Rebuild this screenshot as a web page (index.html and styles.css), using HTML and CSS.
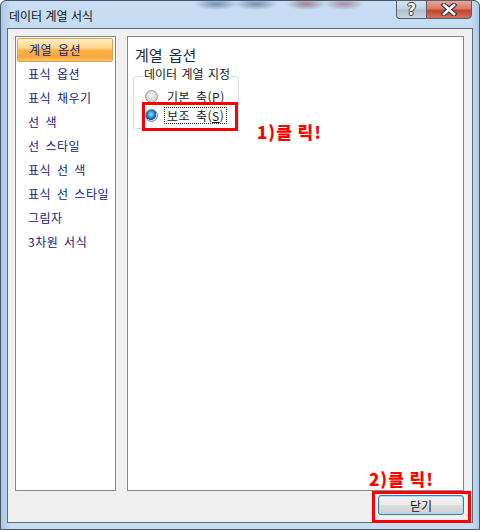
FILE: index.html
```html
<!DOCTYPE html>
<html lang="ko">
<head>
    <meta charset="UTF-8">
    <title>데이터 계열 서식</title>
    <link rel="stylesheet" href="styles.css">
</head>
<body>
    <div class="window">
        <div class="titlebar">
            <span class="title">데이터 계열 서식</span>
            <div class="caption">
                <span class="cap help">?</span>
                <span class="cap close">
                    <svg width="18" height="13" viewBox="0 0 18 13">
                        <path d="M4 2 L14 11 M14 2 L4 11" stroke="#3a3a3a" stroke-width="5" stroke-linecap="square"/>
                        <path d="M4 2 L14 11 M14 2 L4 11" stroke="#fff" stroke-width="2.6" stroke-linecap="square"/>
                    </svg>
                </span>
            </div>
        </div>

        <div class="client">
            <div class="panes">
                <ul class="nav">
                    <li class="active">계열 옵션</li>
                    <li>표식 옵션</li>
                    <li>표식 채우기</li>
                    <li>선 색</li>
                    <li>선 스타일</li>
                    <li>표식 선 색</li>
                    <li>표식 선 스타일</li>
                    <li>그림자</li>
                    <li>3차원 서식</li>
                </ul>
                <div class="content">
                    <h1>계열 옵션</h1>
                    <div class="group">
                        <div class="group-label">데이터 계열 지정</div>
                        <label class="radio">
                            <span class="dot"></span>
                            <span class="text">기본 축(<u>P</u>)</span>
                        </label>
                        <label class="radio checked">
                            <span class="dot"></span>
                            <span class="text focus">보조 축(<u>S</u>)</span>
                        </label>
                    </div>
                </div>
            </div>
            <div class="footer">
                <button class="btn">닫기</button>
            </div>
        </div>

        <!-- annotations -->
        <div class="mark mark-axis"></div>
        <div class="note note-axis">1)클 릭!</div>
        <div class="mark mark-close"></div>
        <div class="note note-close">2)클 릭!</div>
    </div>
</body>
</html>
```

FILE: styles.css
```css
* {
    margin: 0;
    padding: 0;
    box-sizing: border-box;
}

body {
    font-family: "Noto Sans CJK KR", "Noto Sans", sans-serif;
    font-size: 12px;
    background: #fff;
}

.window {
    position: relative;
    width: 480px;
    height: 530px;
    border: 1px solid #4a5566;
    border-radius: 6px 6px 0 0;
    background:
        radial-gradient(ellipse 22px 6px at 215px 3px, rgba(40, 80, 130, 0.55), transparent),
        radial-gradient(ellipse 22px 6px at 255px 3px, rgba(40, 80, 130, 0.55), transparent),
        radial-gradient(ellipse 20px 6px at 305px 3px, rgba(130, 50, 60, 0.55), transparent),
        radial-gradient(ellipse 20px 6px at 343px 3px, rgba(130, 50, 60, 0.45), transparent),
        linear-gradient(90deg, #a9c7e6 0, #c6ddf3 10px, #c6ddf3 470px, #a8c4e2 480px);
    display: flex;
    flex-direction: column;
}

.titlebar {
    height: 27px;
    display: flex;
    justify-content: space-between;
    align-items: flex-start;
}

.title {
    padding: 8px 0 0 8px;
    line-height: 14px;
    color: #111;
}

.caption {
    display: flex;
    margin: -1px 7px 0 0;
}

.cap {
    height: 19px;
    border: 1px solid #55606e;
    display: flex;
    align-items: center;
    justify-content: center;
}

.help {
    width: 30px;
    border-right: none;
    border-radius: 0 0 0 4px;
    background: linear-gradient(#d7e2ee 0, #c3d2e3 45%, #aebfd4 55%, #c8d6e6 100%);
    color: #fff;
    font: bold 15px "DejaVu Sans", sans-serif;
    text-shadow: 0 0 1px #333, 1px 0 0 #444, -1px 0 0 #444, 0 1px 0 #444, 0 -1px 0 #444;
}

.close {
    width: 46px;
    border-radius: 0 0 4px 0;
    background: linear-gradient(#e9a898 0, #d97a66 45%, #c5462e 55%, #d2705a 100%);
}

.client {
    flex: 1;
    margin: 0 6px 6px 6px;
    border: 1px solid #5d6876;
    background: #f0f0f0;
    padding: 7px 8px 0 7px;
    display: flex;
    flex-direction: column;
}

.panes {
    height: 455px;
    display: flex;
    gap: 11px;
}

.nav {
    width: 101px;
    list-style: none;
    background: #fff;
    border: 1px solid #828790;
    padding: 1px 2px 0 1px;
}

.nav li {
    height: 24px;
    line-height: 24px;
    padding-left: 11px;
    color: #13207c;
    white-space: nowrap;
    letter-spacing: 0.5px;
    word-spacing: 2px;
}

.nav li.active {
    border: 1px solid #e0a04a;
    border-radius: 2px;
    line-height: 22px;
    background: linear-gradient(#fff0c8 0, #fdd68a 40%, #fbb24a 52%, #f9a73c 80%, #fcc46a 100%);
}

.content {
    flex: 1;
    background: #fff;
    border: 1px solid #828790;
    padding: 9px 0 0 5px;
}

.content h1 {
    font-size: 15px;
    font-weight: normal;
    line-height: 18px;
    color: #1b2845;
    padding-left: 2px;
    word-spacing: 2px;
}

.group {
    width: 106px;
    margin-top: 12px;
    border: 1px solid #d5dfe5;
    border-radius: 3px;
    padding: 0 0 3px 11px;
}

.group-label {
    width: fit-content;
    margin: -10px 0 6px -3px;
    padding: 0 2px;
    background: #fff;
    line-height: 14px;
    color: #1a1a1a;
    word-spacing: 1px;
}

.radio {
    height: 19px;
    display: flex;
    align-items: center;
    color: #1a1a1a;
}

.dot {
    width: 13px;
    height: 13px;
    border-radius: 50%;
    border: 1px solid #9a9a9a;
    background: radial-gradient(circle at 50% 40%, #f4f4f4 0, #d8d8d8 60%, #c4c4c4 100%);
    margin-right: 6px;
    flex: none;
}

.radio.checked .dot {
    border-color: #6c86a8;
    background:
        radial-gradient(circle at 45% 40%, #9fe0ff 0, #2d8fd8 35%, #0c4f94 60%, transparent 62%),
        radial-gradient(circle, #eef2f6 0, #cfd6de 100%);
}

.text {
    padding: 0 2px;
    line-height: 15px;
    border: 1px solid transparent;
    letter-spacing: 0.5px;
    word-spacing: 2px;
}

.text.focus {
    border: 1px dotted #333;
}

.footer {
    flex: 1;
    display: flex;
    justify-content: flex-end;
    align-items: flex-start;
    padding-top: 4px;
}

.btn {
    width: 86px;
    height: 20px;
    font: 12px "Noto Sans CJK KR", sans-serif;
    color: #111;
    border: 1px solid #3c7fb1;
    border-radius: 3px;
    background: linear-gradient(#f2f2f2 0, #ebebeb 48%, #dddddd 52%, #cfcfcf 100%);
    box-shadow: inset 0 0 0 1px #a8e0f6;
}

.mark {
    position: absolute;
    border: 3px solid #f00;
}

.mark-axis {
    left: 141px;
    top: 101px;
    width: 96px;
    height: 29px;
}

.mark-close {
    left: 371px;
    top: 490px;
    width: 99px;
    height: 32px;
}

.note {
    position: absolute;
    color: #f00;
    font: 900 17px "Noto Sans CJK KR", sans-serif;
    letter-spacing: 1px;
    word-spacing: -1px;
    line-height: 20px;
}

.note-axis {
    left: 256px;
    top: 121px;
}

.note-close {
    left: 368px;
    top: 468px;
}
```
